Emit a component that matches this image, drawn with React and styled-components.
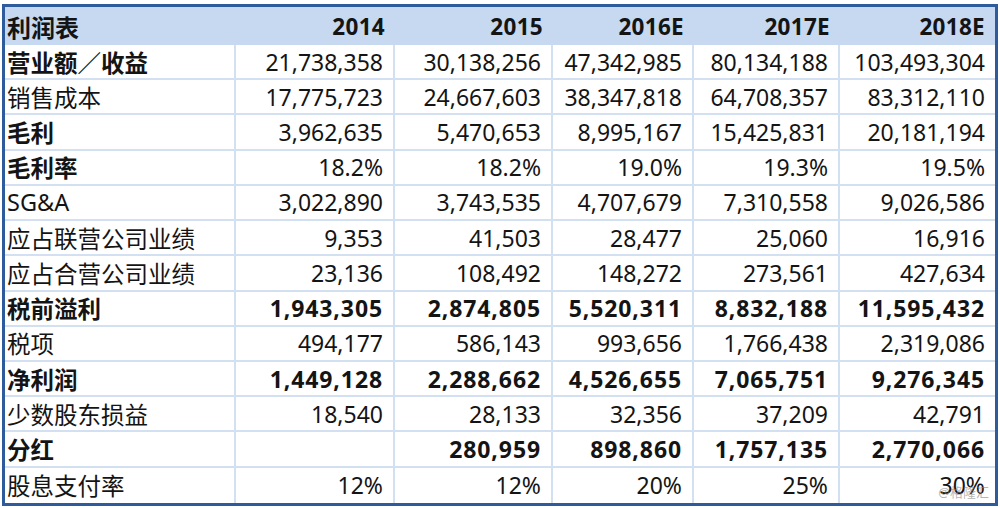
import React from "react";
import styled, { createGlobalStyle } from "styled-components";

const rows = [
  { label: "营业额／收益", bold: true, values: ["21,738,358", "30,138,256", "47,342,985", "80,134,188", "103,493,304"] },
  { label: "销售成本", values: ["17,775,723", "24,667,603", "38,347,818", "64,708,357", "83,312,110"] },
  { label: "毛利", bold: true, values: ["3,962,635", "5,470,653", "8,995,167", "15,425,831", "20,181,194"] },
  { label: "毛利率", bold: true, values: ["18.2%", "18.2%", "19.0%", "19.3%", "19.5%"] },
  { label: "SG&A", values: ["3,022,890", "3,743,535", "4,707,679", "7,310,558", "9,026,586"] },
  { label: "应占联营公司业绩", values: ["9,353", "41,503", "28,477", "25,060", "16,916"] },
  { label: "应占合营公司业绩", values: ["23,136", "108,492", "148,272", "273,561", "427,634"] },
  { label: "税前溢利", bold: true, strong: true, values: ["1,943,305", "2,874,805", "5,520,311", "8,832,188", "11,595,432"] },
  { label: "税项", values: ["494,177", "586,143", "993,656", "1,766,438", "2,319,086"] },
  { label: "净利润", bold: true, strong: true, values: ["1,449,128", "2,288,662", "4,526,655", "7,065,751", "9,276,345"] },
  { label: "少数股东损益", values: ["18,540", "28,133", "32,356", "37,209", "42,791"] },
  { label: "分红", bold: true, strong: true, values: ["", "280,959", "898,860", "1,757,135", "2,770,066"] },
  { label: "股息支付率", values: ["12%", "12%", "20%", "25%", "30%"] },
];

const years = ["2014", "2015", "2016E", "2017E", "2018E"];

export default function App() {
  return (
    <>
      <GlobalStyle />
      <Page>
        <Sheet>
          <HeadCell $label>利润表</HeadCell>
          {years.map((y) => (
            <HeadCell key={y}>{y}</HeadCell>
          ))}
          {rows.map((row, r) => (
            <React.Fragment key={row.label}>
              <Cell $label $bold={row.bold} $lastRow={r === rows.length - 1}>
                {row.label}
              </Cell>
              {row.values.map((v, c) => (
                <Cell
                  key={c}
                  $bold={row.strong}
                  $lastCol={c === row.values.length - 1}
                  $lastRow={r === rows.length - 1}
                >
                  {v}
                </Cell>
              ))}
            </React.Fragment>
          ))}
          <Watermark>@格隆汇</Watermark>
        </Sheet>
      </Page>
    </>
  );
}

const GlobalStyle = createGlobalStyle`
  html, body {
    margin: 0;
    padding: 0;
    background: #ffffff;
  }
  body {
    font-family: "Noto Sans", "Noto Sans CJK SC", sans-serif;
  }
`;

const Page = styled.div`
  width: 1000px;
  height: 508px;
  padding: 4px 0 0 2px;
  box-sizing: border-box;
  background: #ffffff;
`;

const Sheet = styled.div`
  position: relative;
  width: 996px;
  box-sizing: border-box;
  border: 3px solid #2d5b9b;
  display: grid;
  grid-template-columns: 231px 159px 158px 141px 146px 155px;
  grid-template-rows: 38px repeat(13, 35.23px);
  color: #141414;
`;

const HeadCell = styled.div`
  background: #c6d9f0;
  display: flex;
  align-items: center;
  justify-content: ${(p) => (p.$label ? "flex-start" : "flex-end")};
  padding: ${(p) => (p.$label ? "0 0 0 2px" : "0 10px 0 0")};
  font-size: ${(p) => (p.$label ? "24px" : "22.5px")};
  font-weight: 700;
  letter-spacing: ${(p) => (p.$label ? "0" : "0.3px")};
  white-space: nowrap;
`;

const Cell = styled.div`
  display: flex;
  align-items: center;
  justify-content: ${(p) => (p.$label ? "flex-start" : "flex-end")};
  padding: ${(p) => (p.$label ? "0 0 0 2px" : "0 10px 0 0")};
  font-size: ${(p) => (p.$label ? "23.5px" : "23px")};
  font-weight: ${(p) => (p.$bold ? 700 : 400)};
  letter-spacing: ${(p) => (p.$bold && !p.$label ? "0.9px" : "0")};
  white-space: nowrap;
  border-right: ${(p) => (p.$lastCol ? "none" : "2px solid #d3e0f1")};
  border-bottom: ${(p) => (p.$lastRow ? "none" : "2px solid #d3e0f1")};
`;

const Watermark = styled.span`
  position: absolute;
  right: 6px;
  bottom: 2px;
  font-size: 13px;
  color: rgba(130, 130, 130, 0.6);
  pointer-events: none;
`;
